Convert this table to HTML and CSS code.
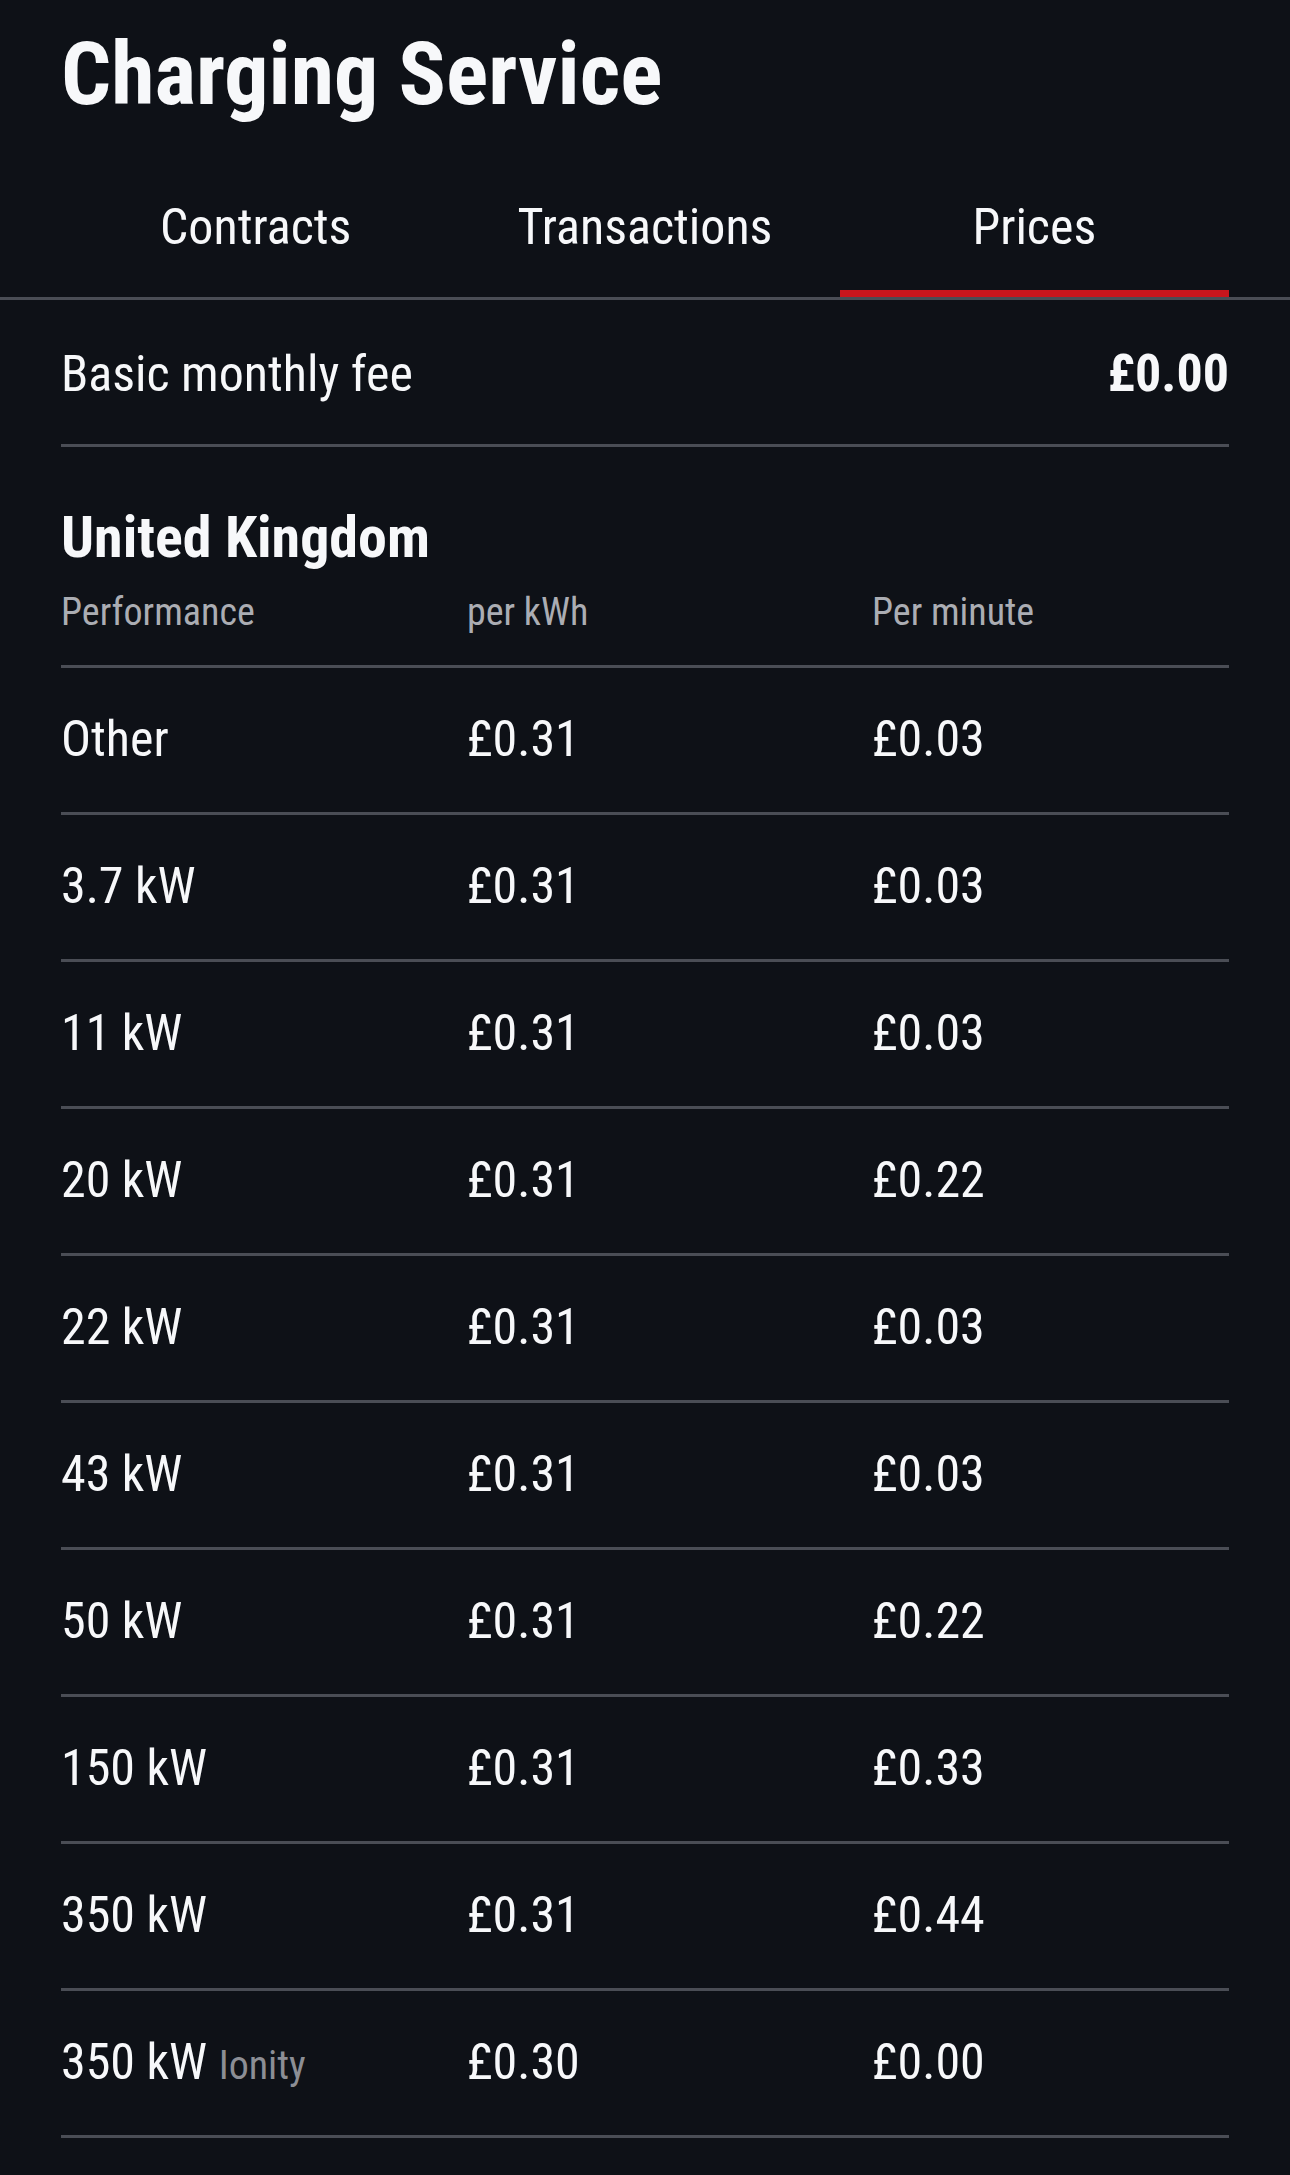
FILE: index.html
```html
<!DOCTYPE html>
<html lang="en">
<head>
  <meta charset="UTF-8" />
  <meta name="viewport" content="width=device-width, initial-scale=1.0"/>
  <title>Charging Service</title>
  <link rel="stylesheet" href="styles.css">
</head>
<body>
  <h1 class="title">Charging Service</h1>

  <!-- Tabs -->
  <nav class="tabs">
    <div class="tab">Contracts</div>
    <div class="tab">Transactions</div>
    <div class="tab active">Prices</div>
  </nav>

  <div class="content">
    <div class="fee-row">
      <span>Basic monthly fee</span>
      <span class="fee-value">£0.00</span>
    </div>

    <h2 class="country">United Kingdom</h2>

    <div class="price-table">
      <div class="row head">
        <span>Performance</span>
        <span>per kWh</span>
        <span>Per minute</span>
      </div>
      <div class="row"><span>Other</span><span>£0.31</span><span>£0.03</span></div>
      <div class="row"><span>3.7 kW</span><span>£0.31</span><span>£0.03</span></div>
      <div class="row"><span>11 kW</span><span>£0.31</span><span>£0.03</span></div>
      <div class="row"><span>20 kW</span><span>£0.31</span><span>£0.22</span></div>
      <div class="row"><span>22 kW</span><span>£0.31</span><span>£0.03</span></div>
      <div class="row"><span>43 kW</span><span>£0.31</span><span>£0.03</span></div>
      <div class="row"><span>50 kW</span><span>£0.31</span><span>£0.22</span></div>
      <div class="row"><span>150 kW</span><span>£0.31</span><span>£0.33</span></div>
      <div class="row"><span>350 kW</span><span>£0.31</span><span>£0.44</span></div>
      <div class="row"><span>350 kW <small class="provider">Ionity</small></span><span>£0.30</span><span>£0.00</span></div>
    </div>
  </div>
</body>
</html>
```

FILE: styles.css
```css
* {
  box-sizing: border-box;
  margin: 0;
  padding: 0;
}

body {
  background: #0e1117;
  color: #f7f8fa;
  font-family: "Roboto Condensed", Roboto, sans-serif;
  font-size: 50px;
  line-height: 54px;
  min-height: 100vh;
}

.title {
  font-size: 88px;
  font-weight: 700;
  line-height: 88px;
  padding: 30px 61px 0;
}

.tabs {
  display: flex;
  padding: 0 61px;
  border-bottom: 3px solid #4a4d55;
}

.tab {
  flex: 1;
  position: relative;
  text-align: center;
  padding: 82px 0 43px;
}

.tab.active::after {
  content: "";
  position: absolute;
  left: 0;
  right: 0;
  bottom: 0;
  height: 7px;
  background: #c8161d;
}

.content {
  padding: 0 61px;
}

.fee-row {
  display: flex;
  justify-content: space-between;
  padding: 47px 0 43px;
  border-bottom: 3px solid #4a4d55;
}

.fee-value {
  font-weight: 700;
  font-size: 52px;
}

.country {
  font-size: 58px;
  font-weight: 700;
  line-height: 58px;
  margin-top: 61px;
}

.row {
  display: grid;
  grid-template-columns: 406px 405px 1fr;
  padding: 44px 0 46px;
  border-bottom: 3px solid #4a4d55;
}

.row.head {
  font-size: 38px;
  line-height: 40px;
  color: #abadb3;
  padding: 26px 0 33px;
}

.provider {
  font-size: 40px;
  line-height: 1;
  color: #8c8e95;
}
```
